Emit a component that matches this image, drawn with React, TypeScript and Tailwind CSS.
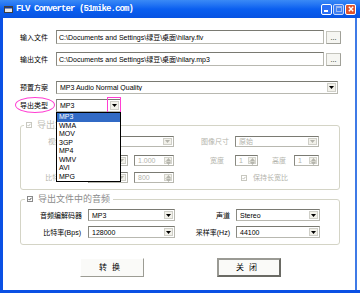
import type { ReactNode } from "react";

const field =
  "flex items-center bg-white border border-[#b8b8b0] border-t-[#7a7a72] border-l-[#8a8a82]";

function Tri({ up, color }: { up?: boolean; color: string }) {
  return (
    <svg width="5" height="3" viewBox="0 0 5 3">
      <path d={up ? "M0 3H5L2.5 0Z" : "M0 0H5L2.5 3Z"} fill={color} />
    </svg>
  );
}

function Select({
  value,
  className,
  disabled,
  children,
}: {
  value: string;
  className: string;
  disabled?: boolean;
  children?: ReactNode;
}) {
  return (
    <div className={`relative p-px ${field} ${className}`}>
      <span
        className={`flex-1 truncate pl-[2px] text-[7px] leading-none ${
          disabled ? "text-[#b4b4ac]" : "text-black"
        }`}
      >
        {value}
      </span>
      <span className="flex h-full w-[9px] shrink-0 items-center justify-center border border-[#cfcfc8] bg-[#f2f1ea]">
        <Tri color={disabled ? "#b4b4ac" : "#000"} />
      </span>
      {children}
    </div>
  );
}

function Spin({ value, className }: { value: string; className: string }) {
  return (
    <div className={`p-px ${field} ${className}`}>
      <span className="flex-1 pl-[2px] text-[7px] leading-none text-[#b4b4ac]">{value}</span>
      <span className="flex h-full w-[8px] shrink-0 flex-col border border-[#d4d4cc] bg-[#f2f1ea]">
        <span className="flex flex-1 items-center justify-center border-b border-[#d4d4cc]">
          <Tri up color="#b4b4ac" />
        </span>
        <span className="flex flex-1 items-center justify-center">
          <Tri color="#b4b4ac" />
        </span>
      </span>
    </div>
  );
}

function Check({ disabled }: { disabled?: boolean }) {
  return (
    <span
      className={`flex h-[6px] w-[6px] shrink-0 items-center justify-center border bg-white ${
        disabled ? "border-[#c8c8c0]" : "border-[#8a8a8a]"
      }`}
    >
      <svg width="4" height="4" viewBox="0 0 4 4">
        <path
          d="M0.5 2L1.6 3.1L3.5 0.8"
          stroke={disabled ? "#c0c0b8" : "#505050"}
          strokeWidth="1"
          fill="none"
        />
      </svg>
    </span>
  );
}

function Label({ children, className }: { children: ReactNode; className: string }) {
  return <span className={`shrink-0 text-[7px] leading-none ${className}`}>{children}</span>;
}

const dis = "text-[#b4b4ac]";

export default function App() {
  const types = ["MP3", "WMA", "MOV", "3GP", "MP4", "WMV", "AVI", "MPG"];

  return (
    <div className="flex h-[293px] w-[360px] flex-col overflow-hidden bg-[#0b50e4] font-['Liberation_Sans','Noto_Sans_CJK_SC',sans-serif] text-black">
      {/* title bar */}
      <div className="flex h-[18px] shrink-0 items-center bg-gradient-to-b from-[#3a8af6] via-[#0a5ff0] to-[#0753e2] pl-[4px] pr-[4px]">
        <svg width="9" height="8" viewBox="0 0 9 8">
          <rect x="0.5" y="1.5" width="8" height="6" fill="#e8e8e8" stroke="#404040" />
          <rect x="1" y="2" width="7" height="1.5" fill="#1a3a8a" />
        </svg>
        <span className="ml-[3px] font-['Liberation_Mono',monospace] text-[9px] font-bold leading-none tracking-[-0.9px] text-white">
          FLV Converter (51mike.com)
        </span>
        <div className="ml-auto flex gap-px">
          <span className="flex h-[11px] w-[11px] items-end rounded-[2px] border border-white bg-[#2a6ff5] pb-[2px] pl-[2px]">
            <span className="h-[2px] w-[4px] bg-white" />
          </span>
          <span className="flex h-[11px] w-[11px] items-center justify-center rounded-[2px] border border-[#c8d8fa] bg-[#3d7ef0]">
            <span className="h-[6px] w-[6px] border border-t-2 border-[#9cb8f0]" />
          </span>
          <span className="flex h-[11px] w-[11px] items-center justify-center rounded-[2px] border border-white bg-[#e0532c]">
            <svg width="6" height="6" viewBox="0 0 6 6">
              <path d="M0.8 0.8L5.2 5.2M5.2 0.8L0.8 5.2" stroke="#fff" strokeWidth="1.4" />
            </svg>
          </span>
        </div>
      </div>

      <div className="flex flex-1">
        <div className="w-[3px] shrink-0" />
        {/* body */}
        <div className="mb-[3px] flex w-[352px] flex-col bg-white">
          <div className="mt-[12px] flex h-[14px] items-center pl-[17px]">
            <Label className="w-[36px]">输入文件</Label>
            <div className={`h-full w-[268px] pl-[2px] ${field}`}>
              <span className="text-[7px] leading-none">C:\Documents and Settings\绿豆\桌面\hilary.flv</span>
            </div>
            <button className="ml-[2px] flex h-[13px] w-[15px] items-center justify-center border border-[#c4c4bc] border-b-[#a0a098] border-r-[#a0a098] bg-[#f6f6f2] text-[7px] leading-none">
              ...
            </button>
          </div>

          <div className="mt-[8px] flex h-[14px] items-center pl-[17px]">
            <Label className="w-[36px]">输出文件</Label>
            <div className={`h-full w-[268px] pl-[2px] ${field}`}>
              <span className="text-[7px] leading-none">C:\Documents and Settings\绿豆\桌面\hilary.mp3</span>
            </div>
            <button className="ml-[2px] flex h-[13px] w-[15px] items-center justify-center border border-[#c4c4bc] border-b-[#a0a098] border-r-[#a0a098] bg-[#f6f6f2] text-[7px] leading-none">
              ...
            </button>
          </div>

          <div className="mt-[15px] flex h-[13px] items-center pl-[17px]">
            <Label className="w-[36px]">预置方案</Label>
            <Select value="MP3 Audio Normal Quality" className="h-full w-[282px]" />
          </div>

          <div className="relative z-10 mt-[5px] flex h-[13px] items-center pl-[17px]">
            <span className="relative w-[36px] shrink-0 text-[7px] leading-none">
              导出类型
              <span className="absolute left-[-5px] top-[-5px] h-[16px] w-[40px] rounded-[50%] border border-[#ff3fd2]" />
            </span>
            <Select value="MP3" className="h-full w-[65px]">
              <span className="absolute right-[-1px] top-[-3px] h-[17px] w-[14px] border border-[#ff3fd2]" />
              <div className="absolute left-[-1px] top-[12px] flex w-[65px] flex-col border border-black bg-white">
                {types.map((t, i) => (
                  <span
                    key={t}
                    className={`h-[8.5px] pl-[2px] text-[7px] leading-[8.5px] ${
                      i === 0 ? "bg-[#316ac5] text-white" : "text-black"
                    }`}
                  >
                    {t}
                  </span>
                ))}
              </div>
            </Select>
          </div>

          {/* video group */}
          <fieldset className="ml-[17px] mt-[8px] h-[70px] w-[320px] rounded-[3px] border border-[#d4d4c6]">
            <legend className="ml-[3px] flex h-[10px] items-center pl-[2px] pr-[3px]">
              <Check disabled />
              <span className="ml-[5px] text-[9px] leading-none text-[#c0c0b8]">导出文件中的视频</span>
            </legend>
            <div className="mt-[6px] flex h-[11px] items-center">
              <Label className={`w-[62px] text-right ${dis}`}>视频编码器</Label>
              <Select disabled value="" className="ml-[5px] h-full w-[86px]" />
              <Label className={`w-[55px] text-right ${dis}`}>图像尺寸</Label>
              <Select disabled value="原始" className="ml-[6px] h-full w-[84px]" />
            </div>
            <div className="mt-[8px] flex h-[11px] items-center">
              <Label className={`w-[62px] text-right ${dis}`}>帧速率</Label>
              <Select disabled value="" className="ml-[5px] h-full w-[40px]" />
              <Spin value="1.000" className="ml-[6px] h-full w-[40px]" />
              <Label className={`w-[50px] text-right ${dis}`}>宽度</Label>
              <Spin value="1" className="ml-[11px] h-full w-[23px]" />
              <Label className={`w-[28px] text-right ${dis}`}>高度</Label>
              <Spin value="1" className="ml-[8px] h-full w-[25px]" />
            </div>
            <div className="mt-[6px] flex h-[11px] items-center">
              <Label className={`w-[62px] text-right ${dis}`}>比特率(Bps)</Label>
              <Select disabled value="" className="ml-[5px] h-full w-[40px]" />
              <Spin value="800" className="ml-[6px] h-full w-[40px]" />
              <span className="ml-[67px]">
                <Check disabled />
              </span>
              <Label className={`ml-[6px] ${dis}`}>保持长宽比</Label>
            </div>
          </fieldset>

          {/* audio group */}
          <fieldset className="ml-[17px] mt-[4px] h-[51px] w-[320px] rounded-[3px] border border-[#d4d4c6]">
            <legend className="ml-[4px] flex h-[10px] items-center pl-[2px] pr-[3px]">
              <Check />
              <span className="ml-[5px] text-[9px] leading-none text-[#8c8c8c]">导出文件中的音频</span>
            </legend>
            <div className="mt-[5px] flex h-[12px] items-center">
              <Label className="w-[61px] text-right">音频编解码器</Label>
              <Select value="MP3" className="ml-[6px] h-full w-[87px]" />
              <Label className="w-[55px] text-right">声道</Label>
              <Select value="Stereo" className="ml-[6px] h-full w-[84px]" />
            </div>
            <div className="mt-[5px] flex h-[12px] items-center">
              <Label className="w-[60px] text-right">比特率(Bps)</Label>
              <Select value="128000" className="ml-[7px] h-full w-[87px]" />
              <Label className="w-[55px] text-right">采样率(Hz)</Label>
              <Select value="44100" className="ml-[6px] h-full w-[84px]" />
            </div>
          </fieldset>

          <div className="mt-[13px] flex h-[19px] pl-[77px]">
            <button className="flex h-full w-[64px] items-center justify-center border border-white border-b-[#9c9c94] border-r-[#9c9c94] bg-[#fafaf8] text-[8px] leading-none tracking-[5px]">
              转换
            </button>
            <button className="ml-[73px] flex h-full w-[64px] items-center justify-center border-2 border-[#6a6a64] border-t-[#9a9a94] border-l-[#9a9a94] bg-[#fafaf8] text-[8px] leading-none tracking-[5px]">
              关闭
            </button>
          </div>
        </div>
        <div className="mb-[3px] w-[2px] shrink-0 bg-[#3f7ae6]" />
        <div className="mb-[3px] w-[3px] shrink-0 bg-white" />
      </div>
    </div>
  );
}
